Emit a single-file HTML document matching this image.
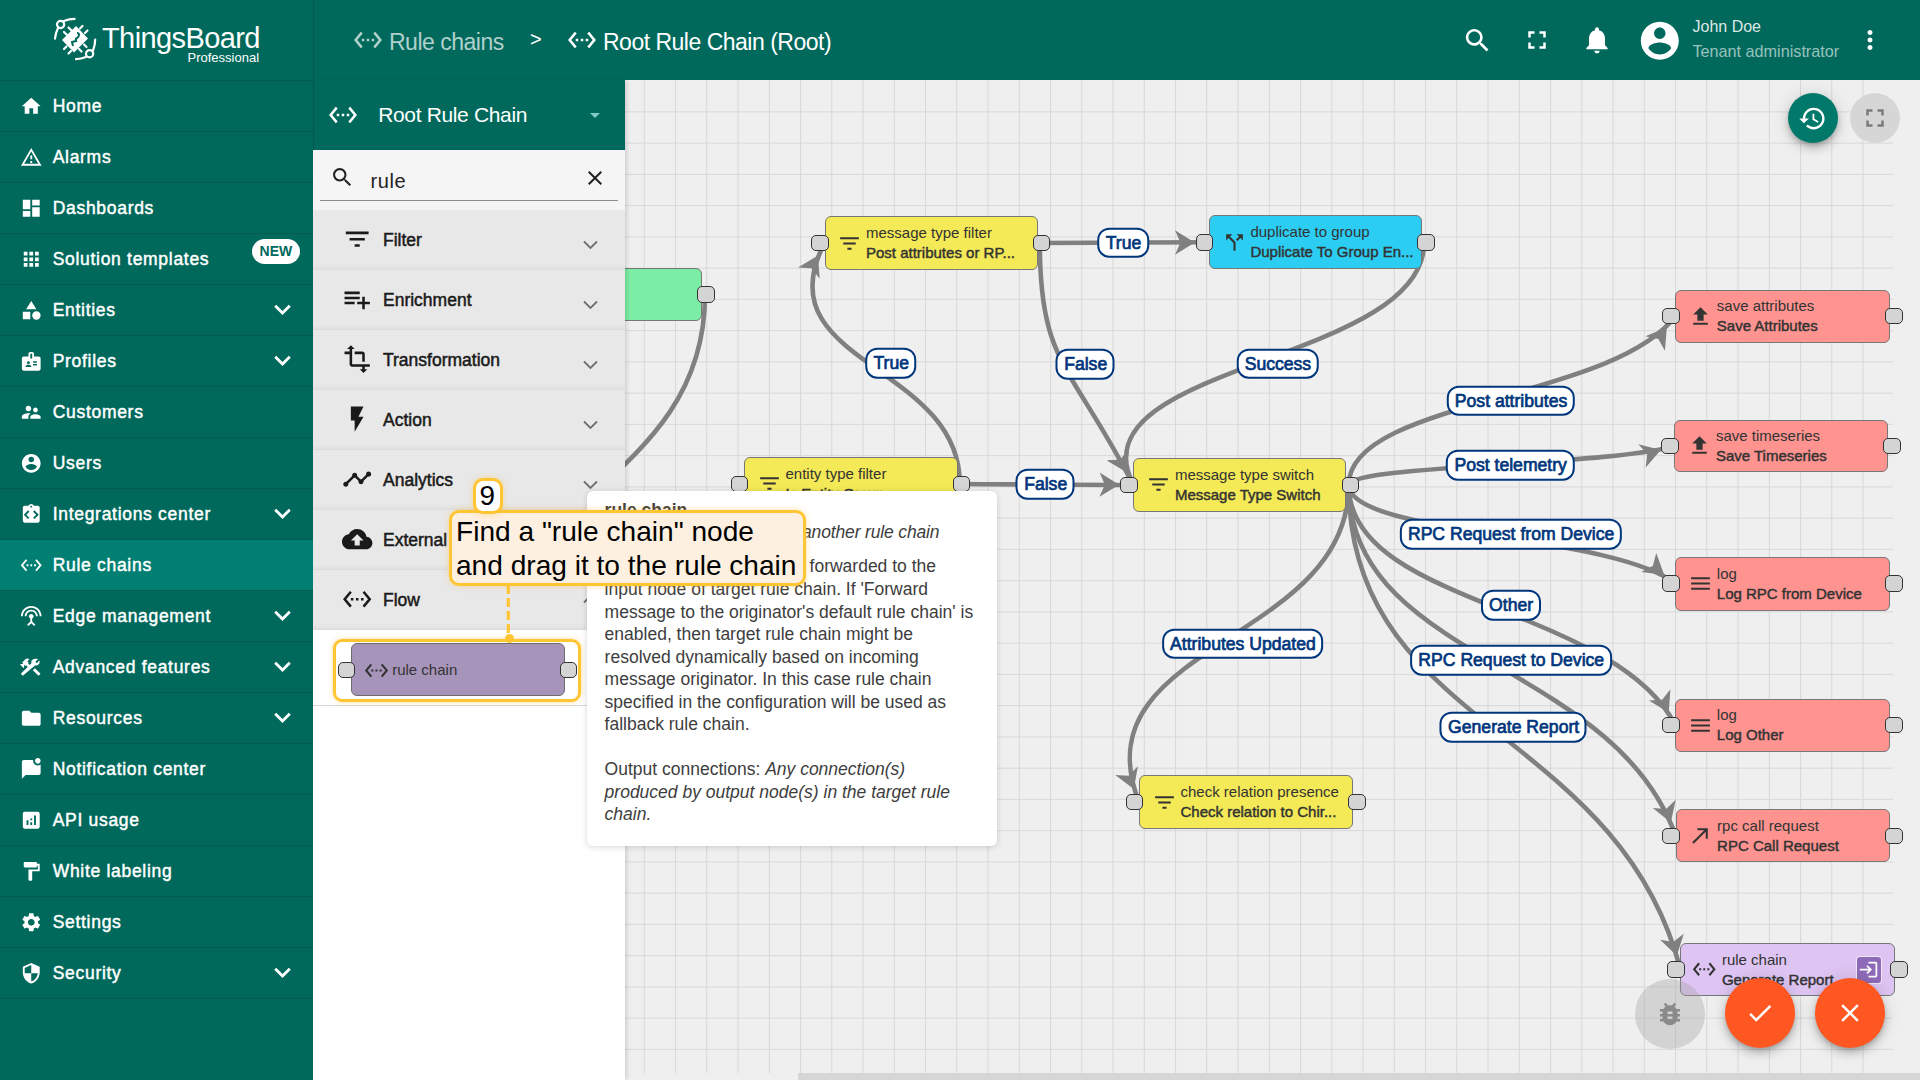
<!DOCTYPE html><html><head><meta charset="utf-8"><style>
html,body{margin:0;padding:0;width:1920px;height:1080px;overflow:hidden;background:#efefef;font-family:"Liberation Sans",sans-serif;}
div{box-sizing:border-box}
</style></head><body>
<div style="position:absolute;left:625px;top:80px;width:1295px;height:1000px;background:#efefef;overflow:hidden">
<svg style="position:absolute;left:0;top:0" width="1295" height="1000"><path d="M19.30 0V993 M50.55 0V993 M81.80 0V993 M113.05 0V993 M144.30 0V993 M175.55 0V993 M206.80 0V993 M238.05 0V993 M269.30 0V993 M300.55 0V993 M331.80 0V993 M363.05 0V993 M394.30 0V993 M425.55 0V993 M456.80 0V993 M488.05 0V993 M519.30 0V993 M550.55 0V993 M581.80 0V993 M613.05 0V993 M644.30 0V993 M675.55 0V993 M706.80 0V993 M738.05 0V993 M769.30 0V993 M800.55 0V993 M831.80 0V993 M863.05 0V993 M894.30 0V993 M925.55 0V993 M956.80 0V993 M988.05 0V993 M1019.30 0V993 M1050.55 0V993 M1081.80 0V993 M1113.05 0V993 M1144.30 0V993 M1175.55 0V993 M1206.80 0V993 M1238.05 0V993 M0 31.90H1268 M0 63.15H1268 M0 94.40H1268 M0 125.65H1268 M0 156.90H1268 M0 188.15H1268 M0 219.40H1268 M0 250.65H1268 M0 281.90H1268 M0 313.15H1268 M0 344.40H1268 M0 375.65H1268 M0 406.90H1268 M0 438.15H1268 M0 469.40H1268 M0 500.65H1268 M0 531.90H1268 M0 563.15H1268 M0 594.40H1268 M0 625.65H1268 M0 656.90H1268 M0 688.15H1268 M0 719.40H1268 M0 750.65H1268 M0 781.90H1268 M0 813.15H1268 M0 844.40H1268 M0 875.65H1268 M0 906.90H1268 M0 938.15H1268 M0 969.40H1268" stroke="#d8d8d8" stroke-width="1" fill="none"/></svg>
</div>
<div style="position:absolute;left:625px;top:80px;width:1295px;height:993px;overflow:hidden">
<svg style="position:absolute;left:-625px;top:-80px" width="1920" height="1080"><g fill="none" stroke="#808080" stroke-width="4.6"><path d="M1039.80 243.00 C1039.80 242.65 1146.40 242.65 1208.90 242.30"/><path d="M1039.80 243.00 C1039.80 363.98 1070.90 363.98 1133.40 484.95"/><path d="M1424.20 242.30 C1424.20 363.62 1070.90 363.62 1133.40 484.95"/><path d="M959.80 483.80 C959.80 363.40 762.00 363.40 824.50 243.00"/><path d="M959.80 483.80 C959.80 484.38 1070.90 484.38 1133.40 484.95"/><path d="M1348.70 484.95 C1348.70 400.57 1612.80 400.57 1675.30 316.20"/><path d="M1348.70 484.95 C1348.70 465.40 1611.90 465.40 1674.40 445.85"/><path d="M1348.70 484.95 C1348.70 534.23 1612.80 534.23 1675.30 583.50"/><path d="M1348.70 484.95 C1348.70 604.98 1612.80 604.98 1675.30 725.00"/><path d="M1348.70 484.95 C1348.70 660.38 1613.10 660.38 1675.60 835.80"/><path d="M1348.70 484.95 C1348.70 727.23 1617.90 727.23 1680.40 969.50"/><path d="M1348.70 484.95 C1348.70 643.55 1076.50 643.55 1139.00 802.15"/><path d="M705.00 294.50 C705.00 502.25 447.50 502.25 510.00 710.00"/></g><g fill="#808080"><polygon points="1194.70,242.38 1175.07,254.69 1180.40,242.46 1174.93,230.29"/><polygon points="1126.88,472.33 1107.00,460.43 1120.32,459.63 1128.68,449.23"/><polygon points="1126.90,472.33 1107.03,460.40 1120.35,459.61 1128.72,449.23"/><polygon points="817.96,255.60 819.71,278.71 811.37,268.29 798.05,267.47"/><polygon points="1119.20,484.82 1099.39,496.84 1104.90,484.69 1099.61,472.44"/><polygon points="1666.85,327.61 1664.93,350.70 1658.34,339.10 1645.32,336.18"/><polygon points="1660.85,450.09 1645.69,467.61 1647.20,454.36 1638.40,444.33"/><polygon points="1664.15,574.71 1641.13,572.09 1652.92,565.85 1656.23,552.93"/><polygon points="1668.74,712.41 1648.82,700.57 1662.14,699.72 1670.46,689.30"/><polygon points="1670.83,822.42 1652.73,807.96 1666.04,808.95 1675.72,799.77"/><polygon points="1676.85,955.75 1660.12,939.72 1673.28,941.90 1683.75,933.63"/><polygon points="1133.79,788.94 1115.22,775.08 1128.55,775.63 1137.92,766.14"/></g></svg>
</div>
<div style="position:absolute;left:625px;top:80px;width:1295px;height:993px;overflow:hidden">
<div style="position:absolute;left:-625px;top:-80px;width:1920px;height:1080px">
<div style="position:absolute;left:489.00px;top:268.00px;width:213.00px;height:53.00px;background:#7ceda5;border:1px solid #777;border-radius:6px"></div><div style="position:absolute;left:475.70px;top:286.20px;width:17.6px;height:16.6px;background:#d4d4d4;border:1.3px solid #333;border-radius:5px"></div><div style="position:absolute;left:697.40px;top:286.20px;width:17.6px;height:16.6px;background:#d4d4d4;border:1.3px solid #333;border-radius:5px"></div>
<div style="position:absolute;left:824.50px;top:216.00px;width:213.00px;height:54.00px;background:#f4e956;border:1px solid #777;border-radius:6px"></div><svg style="position:absolute;left:837.10px;top:230.50px;width:25.00px;height:25.00px;" viewBox="0 0 24 24"><path fill="#333" d="M10 18h4v-2h-4v2zM3 6v2h18V6H3zm3 7h12v-2H6v2z"/></svg><div style="position:absolute;left:866.00px;top:224.13px;white-space:nowrap;font-size:15px;line-height:17.250px;color:#333;">message type filter</div><div style="position:absolute;left:866.00px;top:244.08px;white-space:nowrap;font-size:15px;line-height:17.250px;color:#333;-webkit-text-stroke:0.45px #333">Post attributes or RP...</div><div style="position:absolute;left:811.20px;top:234.70px;width:17.6px;height:16.6px;background:#d4d4d4;border:1.3px solid #333;border-radius:5px"></div><div style="position:absolute;left:1032.90px;top:234.70px;width:17.6px;height:16.6px;background:#d4d4d4;border:1.3px solid #333;border-radius:5px"></div>
<div style="position:absolute;left:1208.90px;top:215.30px;width:213.00px;height:54.00px;background:#2bcdf2;border:1px solid #777;border-radius:6px"></div><svg style="position:absolute;left:1221.50px;top:229.80px;width:25.00px;height:25.00px;" viewBox="0 0 24 24"><path fill="#333" d="M14 4l2.29 2.29-2.88 2.88 1.42 1.42 2.88-2.88L20 10V4zm-4 0H4v6l2.29-2.29 4.71 4.7V20h2v-8.41l-5.29-5.3z"/></svg><div style="position:absolute;left:1250.40px;top:223.43px;white-space:nowrap;font-size:15px;line-height:17.250px;color:#333;">duplicate to group</div><div style="position:absolute;left:1250.40px;top:243.38px;white-space:nowrap;font-size:15px;line-height:17.250px;color:#333;-webkit-text-stroke:0.45px #333">Duplicate To Group En...</div><div style="position:absolute;left:1195.60px;top:234.00px;width:17.6px;height:16.6px;background:#d4d4d4;border:1.3px solid #333;border-radius:5px"></div><div style="position:absolute;left:1417.30px;top:234.00px;width:17.6px;height:16.6px;background:#d4d4d4;border:1.3px solid #333;border-radius:5px"></div>
<div style="position:absolute;left:744.00px;top:456.80px;width:213.50px;height:54.00px;background:#f4e956;border:1px solid #777;border-radius:6px"></div><svg style="position:absolute;left:756.60px;top:471.30px;width:25.00px;height:25.00px;" viewBox="0 0 24 24"><path fill="#333" d="M10 18h4v-2h-4v2zM3 6v2h18V6H3zm3 7h12v-2H6v2z"/></svg><div style="position:absolute;left:785.50px;top:464.93px;white-space:nowrap;font-size:15px;line-height:17.250px;color:#333;">entity type filter</div><div style="position:absolute;left:785.50px;top:484.88px;white-space:nowrap;font-size:15px;line-height:17.250px;color:#333;-webkit-text-stroke:0.45px #333">Is Entity Group</div><div style="position:absolute;left:730.70px;top:475.50px;width:17.6px;height:16.6px;background:#d4d4d4;border:1.3px solid #333;border-radius:5px"></div><div style="position:absolute;left:952.90px;top:475.50px;width:17.6px;height:16.6px;background:#d4d4d4;border:1.3px solid #333;border-radius:5px"></div>
<div style="position:absolute;left:1133.40px;top:458.30px;width:213.00px;height:53.30px;background:#f4e956;border:1px solid #777;border-radius:6px"></div><svg style="position:absolute;left:1146.00px;top:472.45px;width:25.00px;height:25.00px;" viewBox="0 0 24 24"><path fill="#333" d="M10 18h4v-2h-4v2zM3 6v2h18V6H3zm3 7h12v-2H6v2z"/></svg><div style="position:absolute;left:1174.90px;top:466.08px;white-space:nowrap;font-size:15px;line-height:17.250px;color:#333;">message type switch</div><div style="position:absolute;left:1174.90px;top:486.03px;white-space:nowrap;font-size:15px;line-height:17.250px;color:#333;-webkit-text-stroke:0.45px #333">Message Type Switch</div><div style="position:absolute;left:1120.10px;top:476.65px;width:17.6px;height:16.6px;background:#d4d4d4;border:1.3px solid #333;border-radius:5px"></div><div style="position:absolute;left:1341.80px;top:476.65px;width:17.6px;height:16.6px;background:#d4d4d4;border:1.3px solid #333;border-radius:5px"></div>
<div style="position:absolute;left:1675.30px;top:289.70px;width:214.50px;height:53.00px;background:#ff9390;border:1px solid #777;border-radius:6px"></div><svg style="position:absolute;left:1687.90px;top:303.70px;width:25.00px;height:25.00px;" viewBox="0 0 24 24"><path fill="#333" d="M9 16h6v-6h4l-7-7-7 7h4zm-4 2h14v2H5z"/></svg><div style="position:absolute;left:1716.80px;top:297.33px;white-space:nowrap;font-size:15px;line-height:17.250px;color:#333;">save attributes</div><div style="position:absolute;left:1716.80px;top:317.28px;white-space:nowrap;font-size:15px;line-height:17.250px;color:#333;-webkit-text-stroke:0.45px #333">Save Attributes</div><div style="position:absolute;left:1662.00px;top:307.90px;width:17.6px;height:16.6px;background:#d4d4d4;border:1.3px solid #333;border-radius:5px"></div><div style="position:absolute;left:1885.20px;top:307.90px;width:17.6px;height:16.6px;background:#d4d4d4;border:1.3px solid #333;border-radius:5px"></div>
<div style="position:absolute;left:1674.40px;top:419.60px;width:213.50px;height:52.50px;background:#ff9390;border:1px solid #777;border-radius:6px"></div><svg style="position:absolute;left:1687.00px;top:433.35px;width:25.00px;height:25.00px;" viewBox="0 0 24 24"><path fill="#333" d="M9 16h6v-6h4l-7-7-7 7h4zm-4 2h14v2H5z"/></svg><div style="position:absolute;left:1715.90px;top:426.98px;white-space:nowrap;font-size:15px;line-height:17.250px;color:#333;">save timeseries</div><div style="position:absolute;left:1715.90px;top:446.93px;white-space:nowrap;font-size:15px;line-height:17.250px;color:#333;-webkit-text-stroke:0.45px #333">Save Timeseries</div><div style="position:absolute;left:1661.10px;top:437.55px;width:17.6px;height:16.6px;background:#d4d4d4;border:1.3px solid #333;border-radius:5px"></div><div style="position:absolute;left:1883.30px;top:437.55px;width:17.6px;height:16.6px;background:#d4d4d4;border:1.3px solid #333;border-radius:5px"></div>
<div style="position:absolute;left:1675.30px;top:556.50px;width:214.50px;height:54.00px;background:#ff9390;border:1px solid #777;border-radius:6px"></div><svg style="position:absolute;left:1687.90px;top:571.00px;width:25.00px;height:25.00px;" viewBox="0 0 24 24"><path fill="#333" d="M3 18h18v-2H3v2zm0-5h18v-2H3v2zm0-7v2h18V6H3z"/></svg><div style="position:absolute;left:1716.80px;top:564.63px;white-space:nowrap;font-size:15px;line-height:17.250px;color:#333;">log</div><div style="position:absolute;left:1716.80px;top:584.58px;white-space:nowrap;font-size:15px;line-height:17.250px;color:#333;-webkit-text-stroke:0.45px #333">Log RPC from Device</div><div style="position:absolute;left:1662.00px;top:575.20px;width:17.6px;height:16.6px;background:#d4d4d4;border:1.3px solid #333;border-radius:5px"></div><div style="position:absolute;left:1885.20px;top:575.20px;width:17.6px;height:16.6px;background:#d4d4d4;border:1.3px solid #333;border-radius:5px"></div>
<div style="position:absolute;left:1675.30px;top:698.50px;width:214.50px;height:53.00px;background:#ff9390;border:1px solid #777;border-radius:6px"></div><svg style="position:absolute;left:1687.90px;top:712.50px;width:25.00px;height:25.00px;" viewBox="0 0 24 24"><path fill="#333" d="M3 18h18v-2H3v2zm0-5h18v-2H3v2zm0-7v2h18V6H3z"/></svg><div style="position:absolute;left:1716.80px;top:706.13px;white-space:nowrap;font-size:15px;line-height:17.250px;color:#333;">log</div><div style="position:absolute;left:1716.80px;top:726.08px;white-space:nowrap;font-size:15px;line-height:17.250px;color:#333;-webkit-text-stroke:0.45px #333">Log Other</div><div style="position:absolute;left:1662.00px;top:716.70px;width:17.6px;height:16.6px;background:#d4d4d4;border:1.3px solid #333;border-radius:5px"></div><div style="position:absolute;left:1885.20px;top:716.70px;width:17.6px;height:16.6px;background:#d4d4d4;border:1.3px solid #333;border-radius:5px"></div>
<div style="position:absolute;left:1139.00px;top:775.20px;width:214.00px;height:53.90px;background:#f4e956;border:1px solid #777;border-radius:6px"></div><svg style="position:absolute;left:1151.60px;top:789.65px;width:25.00px;height:25.00px;" viewBox="0 0 24 24"><path fill="#333" d="M10 18h4v-2h-4v2zM3 6v2h18V6H3zm3 7h12v-2H6v2z"/></svg><div style="position:absolute;left:1180.50px;top:783.28px;white-space:nowrap;font-size:15px;line-height:17.250px;color:#333;">check relation presence</div><div style="position:absolute;left:1180.50px;top:803.23px;white-space:nowrap;font-size:15px;line-height:17.250px;color:#333;-webkit-text-stroke:0.45px #333">Check relation to Chir...</div><div style="position:absolute;left:1125.70px;top:793.85px;width:17.6px;height:16.6px;background:#d4d4d4;border:1.3px solid #333;border-radius:5px"></div><div style="position:absolute;left:1348.40px;top:793.85px;width:17.6px;height:16.6px;background:#d4d4d4;border:1.3px solid #333;border-radius:5px"></div>
<div style="position:absolute;left:1675.60px;top:809.30px;width:214.00px;height:53.00px;background:#ff9390;border:1px solid #777;border-radius:6px"></div><svg style="position:absolute;left:1688.20px;top:823.30px;width:25.00px;height:25.00px;" viewBox="0 0 24 24"><path fill="#333" d="M9 5v2h6.59L4 18.59 5.41 20 17 8.41V15h2V5z"/></svg><div style="position:absolute;left:1717.10px;top:816.93px;white-space:nowrap;font-size:15px;line-height:17.250px;color:#333;">rpc call request</div><div style="position:absolute;left:1717.10px;top:836.88px;white-space:nowrap;font-size:15px;line-height:17.250px;color:#333;-webkit-text-stroke:0.45px #333">RPC Call Request</div><div style="position:absolute;left:1662.30px;top:827.50px;width:17.6px;height:16.6px;background:#d4d4d4;border:1.3px solid #333;border-radius:5px"></div><div style="position:absolute;left:1885.00px;top:827.50px;width:17.6px;height:16.6px;background:#d4d4d4;border:1.3px solid #333;border-radius:5px"></div>
<div style="position:absolute;left:1680.40px;top:943.00px;width:214.30px;height:53.00px;background:#ddc4f2;border:1px solid #777;border-radius:6px"></div><svg style="position:absolute;left:1692.20px;top:957.25px;width:24.50px;height:24.50px;" viewBox="0 0 24 24"><path fill="#333" d="M7.77 6.76L6.23 5.48.82 12l5.41 6.52 1.54-1.28L3.42 12l4.35-5.24zM7 13h2v-2H7v2zm10-2h-2v2h2v-2zm-6 2h2v-2h-2v2zm6.77-7.52l-1.54 1.28L20.58 12l-4.35 5.24 1.54 1.28L23.18 12l-5.41-6.52z"/></svg><div style="position:absolute;left:1721.90px;top:950.63px;white-space:nowrap;font-size:15px;line-height:17.250px;color:#333;">rule chain</div><div style="position:absolute;left:1721.90px;top:970.58px;white-space:nowrap;font-size:15px;line-height:17.250px;color:#333;-webkit-text-stroke:0.45px #333">Generate Report</div><div style="position:absolute;left:1667.10px;top:961.20px;width:17.6px;height:16.6px;background:#d4d4d4;border:1.3px solid #333;border-radius:5px"></div><div style="position:absolute;left:1890.10px;top:961.20px;width:17.6px;height:16.6px;background:#d4d4d4;border:1.3px solid #333;border-radius:5px"></div><div style="position:absolute;left:1855.50px;top:956.20px;width:26.6px;height:27.6px;background:#8e6bb8;border:1.5px solid rgba(255,255,255,0.85);border-radius:4px"></div><svg style="position:absolute;left:1858.10px;top:959.40px;width:21.00px;height:21.00px;" viewBox="0 0 24 24"><path fill="#fff" d="M11 7L9.6 8.4l2.6 2.6H2v2h10.2l-2.6 2.6L11 17l5-5-5-5zm9 12h-8v2h8c1.1 0 2-.9 2-2V5c0-1.1-.9-2-2-2h-8v2h8v14z"/></svg>
<div style="position:absolute;left:1123.05px;top:242.65px;transform:translate(-50%,-50%);height:30.7px;padding:0 5.6px 0 6.4px;background:#fff;border:2.2px solid #00367c;border-radius:12px;color:#00367c;font-size:17.6px;line-height:27px;-webkit-text-stroke:0.7px #00367c;white-space:nowrap">True</div>
<div style="position:absolute;left:1085.30px;top:363.98px;transform:translate(-50%,-50%);height:30.7px;padding:0 5.6px 0 6.4px;background:#fff;border:2.2px solid #00367c;border-radius:12px;color:#00367c;font-size:17.6px;line-height:27px;-webkit-text-stroke:0.7px #00367c;white-space:nowrap">False</div>
<div style="position:absolute;left:1277.50px;top:363.62px;transform:translate(-50%,-50%);height:30.7px;padding:0 5.6px 0 6.4px;background:#fff;border:2.2px solid #00367c;border-radius:12px;color:#00367c;font-size:17.6px;line-height:27px;-webkit-text-stroke:0.7px #00367c;white-space:nowrap">Success</div>
<div style="position:absolute;left:890.85px;top:363.40px;transform:translate(-50%,-50%);height:30.7px;padding:0 5.6px 0 6.4px;background:#fff;border:2.2px solid #00367c;border-radius:12px;color:#00367c;font-size:17.6px;line-height:27px;-webkit-text-stroke:0.7px #00367c;white-space:nowrap">True</div>
<div style="position:absolute;left:1045.30px;top:484.38px;transform:translate(-50%,-50%);height:30.7px;padding:0 5.6px 0 6.4px;background:#fff;border:2.2px solid #00367c;border-radius:12px;color:#00367c;font-size:17.6px;line-height:27px;-webkit-text-stroke:0.7px #00367c;white-space:nowrap">False</div>
<div style="position:absolute;left:1510.70px;top:400.57px;transform:translate(-50%,-50%);height:30.7px;padding:0 5.6px 0 6.4px;background:#fff;border:2.2px solid #00367c;border-radius:12px;color:#00367c;font-size:17.6px;line-height:27px;-webkit-text-stroke:0.7px #00367c;white-space:nowrap">Post attributes</div>
<div style="position:absolute;left:1510.25px;top:465.40px;transform:translate(-50%,-50%);height:30.7px;padding:0 5.6px 0 6.4px;background:#fff;border:2.2px solid #00367c;border-radius:12px;color:#00367c;font-size:17.6px;line-height:27px;-webkit-text-stroke:0.7px #00367c;white-space:nowrap">Post telemetry</div>
<div style="position:absolute;left:1510.70px;top:534.23px;transform:translate(-50%,-50%);height:30.7px;padding:0 5.6px 0 6.4px;background:#fff;border:2.2px solid #00367c;border-radius:12px;color:#00367c;font-size:17.6px;line-height:27px;-webkit-text-stroke:0.7px #00367c;white-space:nowrap">RPC Request from Device</div>
<div style="position:absolute;left:1510.70px;top:604.98px;transform:translate(-50%,-50%);height:30.7px;padding:0 5.6px 0 6.4px;background:#fff;border:2.2px solid #00367c;border-radius:12px;color:#00367c;font-size:17.6px;line-height:27px;-webkit-text-stroke:0.7px #00367c;white-space:nowrap">Other</div>
<div style="position:absolute;left:1510.85px;top:660.38px;transform:translate(-50%,-50%);height:30.7px;padding:0 5.6px 0 6.4px;background:#fff;border:2.2px solid #00367c;border-radius:12px;color:#00367c;font-size:17.6px;line-height:27px;-webkit-text-stroke:0.7px #00367c;white-space:nowrap">RPC Request to Device</div>
<div style="position:absolute;left:1513.25px;top:727.23px;transform:translate(-50%,-50%);height:30.7px;padding:0 5.6px 0 6.4px;background:#fff;border:2.2px solid #00367c;border-radius:12px;color:#00367c;font-size:17.6px;line-height:27px;-webkit-text-stroke:0.7px #00367c;white-space:nowrap">Generate Report</div>
<div style="position:absolute;left:1242.55px;top:643.55px;transform:translate(-50%,-50%);height:30.7px;padding:0 5.6px 0 6.4px;background:#fff;border:2.2px solid #00367c;border-radius:12px;color:#00367c;font-size:17.6px;line-height:27px;-webkit-text-stroke:0.7px #00367c;white-space:nowrap">Attributes Updated</div>
</div></div>
<div style="position:absolute;left:798px;top:1073px;width:1122px;height:7px;background:#d6d6d6"></div>
<div style="position:absolute;left:1788px;top:93px;width:50px;height:50px;border-radius:50%;background:#00796b;box-shadow:0 3px 5px -1px rgba(0,0,0,.2),0 6px 10px 0 rgba(0,0,0,.14),0 1px 18px 0 rgba(0,0,0,.12)"></div>
<svg style="position:absolute;left:1798.00px;top:103.50px;width:29.00px;height:29.00px;" viewBox="0 0 24 24"><path fill="#fff" d="M13 3c-4.97 0-9 4.03-9 9H1l3.89 3.89.07.14L9 12H6c0-3.87 3.13-7 7-7s7 3.13 7 7-3.13 7-7 7c-1.93 0-3.68-.79-4.94-2.06l-1.42 1.42C8.27 19.99 10.51 21 13 21c4.97 0 9-4.03 9-9s-4.03-9-9-9zm-1 5v5l4.28 2.54.72-1.21-3.5-2.08V8H12z"/></svg>
<div style="position:absolute;left:1850px;top:93px;width:50px;height:50px;border-radius:50%;background:#d6d6d6"></div>
<svg style="position:absolute;left:1860.00px;top:103.00px;width:30.00px;height:30.00px;" viewBox="0 0 24 24"><path fill="#7b7b7b" d="M7 14H5v5h5v-2H7v-3zm-2-4h2V7h3V5H5v5zm12 7h-3v2h5v-5h-2v3zM14 5v2h3v3h2V5h-5z"/></svg>
<div style="position:absolute;left:1635px;top:978.5px;width:70px;height:70px;border-radius:50%;background:rgba(160,160,160,0.35)"></div>
<svg style="position:absolute;left:1655.00px;top:998.50px;width:30.00px;height:30.00px;" viewBox="0 0 24 24"><path fill="#8a8a8a" d="M20 8h-2.81c-.45-.78-1.07-1.45-1.82-1.96L17 4.41 15.59 3l-2.17 2.17C12.96 5.06 12.49 5 12 5c-.49 0-.96.06-1.41.17L8.41 3 7 4.41l1.62 1.63C7.88 6.55 7.26 7.22 6.81 8H4v2h2.09c-.05.33-.09.66-.09 1v1H4v2h2v1c0 .34.04.67.09 1H4v2h2.81c1.04 1.79 2.97 3 5.19 3s4.15-1.21 5.19-3H20v-2h-2.09c.05-.33.09-.66.09-1v-1h2v-2h-2v-1c0-.34-.04-.67-.09-1H20V8zm-6 8h-4v-2h4v2zm0-4h-4v-2h4v2z"/></svg>
<div style="position:absolute;left:1725px;top:977.5px;width:70px;height:70px;border-radius:50%;background:#ff5722;box-shadow:0 3px 5px -1px rgba(0,0,0,.2),0 6px 10px 0 rgba(0,0,0,.14),0 1px 18px 0 rgba(0,0,0,.12)"></div>
<svg style="position:absolute;left:1745.00px;top:997.50px;width:30.00px;height:30.00px;" viewBox="0 0 24 24"><path fill="#fff" d="M9 16.2L4.8 12l-1.4 1.4L9 19 21 7l-1.4-1.4L9 16.2z"/></svg>
<div style="position:absolute;left:1815px;top:977.5px;width:70px;height:70px;border-radius:50%;background:#ff5722;box-shadow:0 3px 5px -1px rgba(0,0,0,.2),0 6px 10px 0 rgba(0,0,0,.14),0 1px 18px 0 rgba(0,0,0,.12)"></div>
<svg style="position:absolute;left:1835.00px;top:997.50px;width:30.00px;height:30.00px;" viewBox="0 0 24 24"><path fill="#fff" d="M19 6.41L17.59 5 12 10.59 6.41 5 5 6.41 10.59 12 5 17.59 6.41 19 12 13.41 17.59 19 19 17.59 13.41 12z"/></svg>
<div style="position:absolute;left:313px;top:0;width:1607px;height:80px;background:#00695c"></div>
<svg style="position:absolute;left:353.00px;top:25.00px;width:30.00px;height:30.00px;" viewBox="0 0 24 24"><path fill="rgba(255,255,255,0.7)" d="M7.77 6.76L6.23 5.48.82 12l5.41 6.52 1.54-1.28L3.42 12l4.35-5.24zM7 13h2v-2H7v2zm10-2h-2v2h2v-2zm-6 2h2v-2h-2v2zm6.77-7.52l-1.54 1.28L20.58 12l-4.35 5.24 1.54 1.28L23.18 12l-5.41-6.52z"/></svg>
<div style="position:absolute;left:389.00px;top:28.81px;white-space:nowrap;font-size:23px;line-height:26.450px;color:rgba(255,255,255,0.7);letter-spacing:-0.5px">Rule chains</div>
<div style="position:absolute;left:530.00px;top:27.57px;white-space:nowrap;font-size:20px;line-height:23.000px;color:#fff;">&gt;</div>
<svg style="position:absolute;left:566.50px;top:25.00px;width:30.00px;height:30.00px;" viewBox="0 0 24 24"><path fill="#fff" d="M7.77 6.76L6.23 5.48.82 12l5.41 6.52 1.54-1.28L3.42 12l4.35-5.24zM7 13h2v-2H7v2zm10-2h-2v2h2v-2zm-6 2h2v-2h-2v2zm6.77-7.52l-1.54 1.28L20.58 12l-4.35 5.24 1.54 1.28L23.18 12l-5.41-6.52z"/></svg>
<div style="position:absolute;left:603.00px;top:28.81px;white-space:nowrap;font-size:23px;line-height:26.450px;color:#fff;letter-spacing:-0.5px">Root Rule Chain (Root)</div>
<svg style="position:absolute;left:1461.70px;top:25.10px;width:31.00px;height:31.00px;" viewBox="0 0 24 24"><path fill="#fff" d="M15.5 14h-.79l-.28-.27C15.41 12.59 16 11.11 16 9.5 16 5.91 13.09 3 9.5 3S3 5.91 3 9.5 5.91 16 9.5 16c1.61 0 3.09-.59 4.23-1.57l.27.28v.79l5 4.99L20.49 19l-4.99-5zm-6 0C7.01 14 5 11.99 5 9.5S7.01 5 9.5 5 14 7.01 14 9.5 11.99 14 9.5 14z"/></svg>
<svg style="position:absolute;left:1522.00px;top:25.00px;width:30.00px;height:30.00px;" viewBox="0 0 24 24"><path fill="#fff" d="M7 14H5v5h5v-2H7v-3zm-2-4h2V7h3V5H5v5zm12 7h-3v2h5v-5h-2v3zM14 5v2h3v3h2V5h-5z"/></svg>
<svg style="position:absolute;left:1581.40px;top:24.00px;width:32.00px;height:32.00px;" viewBox="0 0 24 24"><path fill="#fff" d="M12 22c1.1 0 2-.9 2-2h-4c0 1.1.89 2 2 2zm6-6v-5c0-3.07-1.64-5.64-4.5-6.32V4c0-.83-.67-1.5-1.5-1.5s-1.5.67-1.5 1.5v.68C7.63 5.36 6 7.92 6 11v5l-2 2v1h16v-1l-2-2z"/></svg>
<svg style="position:absolute;left:1637.00px;top:17.80px;width:45.60px;height:45.60px;" viewBox="0 0 24 24"><path fill="#fff" d="M12 2C6.48 2 2 6.48 2 12s4.48 10 10 10 10-4.48 10-10S17.52 2 12 2zm0 3c1.66 0 3 1.34 3 3s-1.34 3-3 3-3-1.34-3-3 1.34-3 3-3zm0 14.2c-2.5 0-4.71-1.28-6-3.22.03-1.99 4-3.08 6-3.08 1.99 0 5.97 1.09 6 3.08-1.29 1.94-3.5 3.22-6 3.22z"/></svg>
<div style="position:absolute;left:1692.50px;top:18.26px;white-space:nowrap;font-size:16px;line-height:18.400px;color:rgba(255,255,255,0.87);">John Doe</div>
<div style="position:absolute;left:1692.50px;top:42.07px;white-space:nowrap;font-size:16.2px;line-height:18.630px;color:rgba(255,255,255,0.6);">Tenant administrator</div>
<svg style="position:absolute;left:1855.00px;top:25.00px;width:30.00px;height:30.00px;" viewBox="0 0 24 24"><path fill="#fff" d="M12 8c1.1 0 2-.9 2-2s-.9-2-2-2-2 .9-2 2 .9 2 2 2zm0 2c-1.1 0-2 .9-2 2s.9 2 2 2 2-.9 2-2-.9-2-2-2zm0 6c-1.1 0-2 .9-2 2s.9 2 2 2 2-.9 2-2-.9-2-2-2z"/></svg>
<div style="position:absolute;left:0;top:0;width:313px;height:1080px;background:#00695c"></div>
<div style="position:absolute;left:0;top:80px;width:313px;height:1px;background:rgba(0,0,0,0.12)"></div>
<div style="position:absolute;left:0;top:131px;width:313px;height:1px;background:rgba(0,0,0,0.12)"></div>
<svg style="position:absolute;left:19.80px;top:94.70px;width:22.50px;height:22.50px;" viewBox="0 0 24 24"><path fill="#fff" d="M10 20v-6h4v6h5v-8h3L12 3 2 12h3v8z"/></svg>
<div style="position:absolute;left:52.70px;top:95.87px;white-space:nowrap;font-size:17.5px;line-height:20.125px;color:#fff;letter-spacing:0.7px;-webkit-text-stroke:0.45px #fff">Home</div>
<div style="position:absolute;left:0;top:182px;width:313px;height:1px;background:rgba(0,0,0,0.12)"></div>
<svg style="position:absolute;left:19.80px;top:145.70px;width:22.50px;height:22.50px;" viewBox="0 0 24 24"><path fill="#fff" d="M12 5.99L19.53 19H4.47L12 5.99M12 2L1 21h22L12 2zm1 14h-2v2h2v-2zm0-6h-2v4h2v-4z"/></svg>
<div style="position:absolute;left:52.70px;top:146.87px;white-space:nowrap;font-size:17.5px;line-height:20.125px;color:#fff;letter-spacing:0.7px;-webkit-text-stroke:0.45px #fff">Alarms</div>
<div style="position:absolute;left:0;top:233px;width:313px;height:1px;background:rgba(0,0,0,0.12)"></div>
<svg style="position:absolute;left:19.80px;top:196.70px;width:22.50px;height:22.50px;" viewBox="0 0 24 24"><path fill="#fff" d="M3 13h8V3H3v10zm0 8h8v-6H3v6zm10 0h8V11h-8v10zm0-18v6h8V3h-8z"/></svg>
<div style="position:absolute;left:52.70px;top:197.87px;white-space:nowrap;font-size:17.5px;line-height:20.125px;color:#fff;letter-spacing:0.7px;-webkit-text-stroke:0.45px #fff">Dashboards</div>
<div style="position:absolute;left:0;top:284px;width:313px;height:1px;background:rgba(0,0,0,0.12)"></div>
<svg style="position:absolute;left:19.80px;top:247.70px;width:22.50px;height:22.50px;" viewBox="0 0 24 24"><path fill="#fff" d="M4 8h4V4H4v4zm6 12h4v-4h-4v4zm-6 0h4v-4H4v4zm0-6h4v-4H4v4zm6 0h4v-4h-4v4zm6-10v4h4V4h-4zm-6 4h4V4h-4v4zm6 6h4v-4h-4v4zm0 6h4v-4h-4v4z"/></svg>
<div style="position:absolute;left:52.70px;top:248.87px;white-space:nowrap;font-size:17.5px;line-height:20.125px;color:#fff;letter-spacing:0.7px;-webkit-text-stroke:0.45px #fff">Solution templates</div>
<div style="position:absolute;left:0;top:335px;width:313px;height:1px;background:rgba(0,0,0,0.12)"></div>
<svg style="position:absolute;left:19.80px;top:298.70px;width:22.50px;height:22.50px;" viewBox="0 0 24 24"><path fill="#fff" d="M12 2l-5.5 9h11zM17.5 13a4.5 4.5 0 1 0 0 9a4.5 4.5 0 1 0 0-9zM3 13.5h8v8H3z"/></svg>
<div style="position:absolute;left:52.70px;top:299.87px;white-space:nowrap;font-size:17.5px;line-height:20.125px;color:#fff;letter-spacing:0.7px;-webkit-text-stroke:0.45px #fff">Entities</div>
<svg style="position:absolute;left:266.25px;top:292.90px;width:33.00px;height:33.00px;" viewBox="0 0 24 24"><path fill="#fff" d="M16.59 8.59L12 13.17 7.41 8.59 6 10l6 6 6-6z"/></svg>
<div style="position:absolute;left:0;top:386px;width:313px;height:1px;background:rgba(0,0,0,0.12)"></div>
<svg style="position:absolute;left:19.80px;top:349.70px;width:22.50px;height:22.50px;" viewBox="0 0 24 24"><path fill="#fff" d="M20 7h-5V4c0-1.1-.9-2-2-2h-2c-1.1 0-2 .9-2 2v3H4c-1.1 0-2 .9-2 2v11c0 1.1.9 2 2 2h16c1.1 0 2-.9 2-2V9c0-1.1-.9-2-2-2zM9 12c.83 0 1.5.67 1.5 1.5S9.83 15 9 15s-1.5-.67-1.5-1.5S8.17 12 9 12zm3 6H6v-.43c0-.6.36-1.15.92-1.39.64-.28 1.34-.43 2.08-.43s1.44.15 2.08.43c.55.24.92.78.92 1.39V18zm1-9h-2V4h2v5zm5 7.5h-4V15h4v1.5zm0-3h-4V12h4v1.5z"/></svg>
<div style="position:absolute;left:52.70px;top:350.87px;white-space:nowrap;font-size:17.5px;line-height:20.125px;color:#fff;letter-spacing:0.7px;-webkit-text-stroke:0.45px #fff">Profiles</div>
<svg style="position:absolute;left:266.25px;top:343.90px;width:33.00px;height:33.00px;" viewBox="0 0 24 24"><path fill="#fff" d="M16.59 8.59L12 13.17 7.41 8.59 6 10l6 6 6-6z"/></svg>
<div style="position:absolute;left:0;top:437px;width:313px;height:1px;background:rgba(0,0,0,0.12)"></div>
<svg style="position:absolute;left:19.80px;top:400.70px;width:22.50px;height:22.50px;" viewBox="0 0 24 24"><path fill="#fff" d="M16.5 12c1.38 0 2.49-1.12 2.49-2.5S17.88 7 16.5 7C15.12 7 14 8.12 14 9.5s1.12 2.5 2.5 2.5zM9 11c1.66 0 2.99-1.34 2.99-3S10.66 5 9 5C7.34 5 6 6.34 6 8s1.34 3 3 3zm7.5 3c-1.83 0-5.5.92-5.5 2.75V19h11v-2.25c0-1.83-3.67-2.75-5.5-2.75zM9 13c-2.33 0-7 1.17-7 3.5V19h7v-2.25c0-.85.33-2.34 2.37-3.47C10.5 13.1 9.66 13 9 13z"/></svg>
<div style="position:absolute;left:52.70px;top:401.87px;white-space:nowrap;font-size:17.5px;line-height:20.125px;color:#fff;letter-spacing:0.7px;-webkit-text-stroke:0.45px #fff">Customers</div>
<div style="position:absolute;left:0;top:488px;width:313px;height:1px;background:rgba(0,0,0,0.12)"></div>
<svg style="position:absolute;left:19.80px;top:451.70px;width:22.50px;height:22.50px;" viewBox="0 0 24 24"><path fill="#fff" d="M12 2C6.48 2 2 6.48 2 12s4.48 10 10 10 10-4.48 10-10S17.52 2 12 2zm0 3c1.66 0 3 1.34 3 3s-1.34 3-3 3-3-1.34-3-3 1.34-3 3-3zm0 14.2c-2.5 0-4.71-1.28-6-3.22.03-1.99 4-3.08 6-3.08 1.99 0 5.97 1.09 6 3.08-1.29 1.94-3.5 3.22-6 3.22z"/></svg>
<div style="position:absolute;left:52.70px;top:452.87px;white-space:nowrap;font-size:17.5px;line-height:20.125px;color:#fff;letter-spacing:0.7px;-webkit-text-stroke:0.45px #fff">Users</div>
<div style="position:absolute;left:0;top:539px;width:313px;height:1px;background:rgba(0,0,0,0.12)"></div>
<svg style="position:absolute;left:19.80px;top:502.70px;width:22.50px;height:22.50px;" viewBox="0 0 24 24"><path fill="#fff" d="M19 3h-4.18C14.4 1.84 13.3 1 12 1s-2.4.84-2.82 2H5c-1.1 0-2 .9-2 2v14c0 1.1.9 2 2 2h14c1.1 0 2-.9 2-2V5c0-1.1-.9-2-2-2zm-7 0c.55 0 1 .45 1 1s-.45 1-1 1-1-.45-1-1 .45-1 1-1zM10 15.6L8.6 17 4 12.4 8.6 7.8 10 9.2 6.8 12.4zM15.4 17L14 15.6l3.2-3.2L14 9.2l1.4-1.4 4.6 4.6z"/></svg>
<div style="position:absolute;left:52.70px;top:503.87px;white-space:nowrap;font-size:17.5px;line-height:20.125px;color:#fff;letter-spacing:0.7px;-webkit-text-stroke:0.45px #fff">Integrations center</div>
<svg style="position:absolute;left:266.25px;top:496.90px;width:33.00px;height:33.00px;" viewBox="0 0 24 24"><path fill="#fff" d="M16.59 8.59L12 13.17 7.41 8.59 6 10l6 6 6-6z"/></svg>
<div style="position:absolute;left:0;top:540px;width:313px;height:50px;background:#007f72"></div>
<div style="position:absolute;left:0;top:590px;width:313px;height:1px;background:rgba(0,0,0,0.12)"></div>
<svg style="position:absolute;left:19.80px;top:553.70px;width:22.50px;height:22.50px;" viewBox="0 0 24 24"><path fill="#fff" d="M7.77 6.76L6.23 5.48.82 12l5.41 6.52 1.54-1.28L3.42 12l4.35-5.24zM7 13h2v-2H7v2zm10-2h-2v2h2v-2zm-6 2h2v-2h-2v2zm6.77-7.52l-1.54 1.28L20.58 12l-4.35 5.24 1.54 1.28L23.18 12l-5.41-6.52z"/></svg>
<div style="position:absolute;left:52.70px;top:554.87px;white-space:nowrap;font-size:17.5px;line-height:20.125px;color:#fff;letter-spacing:0.7px;-webkit-text-stroke:0.45px #fff">Rule chains</div>
<div style="position:absolute;left:0;top:641px;width:313px;height:1px;background:rgba(0,0,0,0.12)"></div>
<svg style="position:absolute;left:19.80px;top:604.70px;width:22.50px;height:22.50px;" viewBox="0 0 24 24"><path fill="#fff" d="M12 5c-3.87 0-7 3.13-7 7h2c0-2.76 2.24-5 5-5s5 2.24 5 5h2c0-3.87-3.13-7-7-7zm1 9.29c.88-.39 1.5-1.26 1.5-2.29 0-1.38-1.12-2.5-2.5-2.5S9.5 10.62 9.5 12c0 1.02.62 1.9 1.5 2.29v3.3L7.59 21 9 22.41l3-3 3 3L16.41 21 13 17.59v-3.3zM12 1C5.93 1 1 5.93 1 12h2c0-4.97 4.03-9 9-9s9 4.03 9 9h2c0-6.07-4.93-11-11-11z"/></svg>
<div style="position:absolute;left:52.70px;top:605.87px;white-space:nowrap;font-size:17.5px;line-height:20.125px;color:#fff;letter-spacing:0.7px;-webkit-text-stroke:0.45px #fff">Edge management</div>
<svg style="position:absolute;left:266.25px;top:598.90px;width:33.00px;height:33.00px;" viewBox="0 0 24 24"><path fill="#fff" d="M16.59 8.59L12 13.17 7.41 8.59 6 10l6 6 6-6z"/></svg>
<div style="position:absolute;left:0;top:692px;width:313px;height:1px;background:rgba(0,0,0,0.12)"></div>
<svg style="position:absolute;left:19.80px;top:655.70px;width:22.50px;height:22.50px;" viewBox="0 0 24 24"><path fill="#fff" d="M13.78 15.17l2.12-2.12 6.01 6.01-2.12 2.12zm3.72-5.17c1.93 0 3.5-1.57 3.5-3.5 0-.58-.16-1.12-.41-1.6l-2.7 2.7-1.49-1.49 2.7-2.7c-.48-.25-1.02-.41-1.6-.41C13.57 3 12 4.57 12 6.5c0 .41.08.8.21 1.16l-1.85 1.85-1.78-1.78.71-.71-1.41-1.41L10 3.49c-1.17-1.17-3.07-1.17-4.24 0L2.22 7.03l1.41 1.41H.81l-.71.71 3.54 3.54.71-.71V9.15l1.41 1.41.71-.71 1.78 1.78-7.41 7.41 2.12 2.12L16.34 9.79c.36.13.75.21 1.16.21z"/></svg>
<div style="position:absolute;left:52.70px;top:656.87px;white-space:nowrap;font-size:17.5px;line-height:20.125px;color:#fff;letter-spacing:0.7px;-webkit-text-stroke:0.45px #fff">Advanced features</div>
<svg style="position:absolute;left:266.25px;top:649.90px;width:33.00px;height:33.00px;" viewBox="0 0 24 24"><path fill="#fff" d="M16.59 8.59L12 13.17 7.41 8.59 6 10l6 6 6-6z"/></svg>
<div style="position:absolute;left:0;top:743px;width:313px;height:1px;background:rgba(0,0,0,0.12)"></div>
<svg style="position:absolute;left:19.80px;top:706.70px;width:22.50px;height:22.50px;" viewBox="0 0 24 24"><path fill="#fff" d="M10 4H4c-1.1 0-1.99.9-1.99 2L2 18c0 1.1.9 2 2 2h16c1.1 0 2-.9 2-2V8c0-1.1-.9-2-2-2h-8l-2-2z"/></svg>
<div style="position:absolute;left:52.70px;top:707.87px;white-space:nowrap;font-size:17.5px;line-height:20.125px;color:#fff;letter-spacing:0.7px;-webkit-text-stroke:0.45px #fff">Resources</div>
<svg style="position:absolute;left:266.25px;top:700.90px;width:33.00px;height:33.00px;" viewBox="0 0 24 24"><path fill="#fff" d="M16.59 8.59L12 13.17 7.41 8.59 6 10l6 6 6-6z"/></svg>
<div style="position:absolute;left:0;top:794px;width:313px;height:1px;background:rgba(0,0,0,0.12)"></div>
<svg style="position:absolute;left:19.80px;top:757.70px;width:22.50px;height:22.50px;" viewBox="0 0 24 24"><path fill="#fff" d="M22 6.98V16c0 1.1-.9 2-2 2H6l-4 4V4c0-1.1.9-2 2-2h10.1c-.06.32-.1.66-.1 1 0 2.76 2.24 5 5 5 1.13 0 2.16-.39 3-1.02zM16 3c0 1.66 1.34 3 3 3s3-1.34 3-3-1.34-3-3-3-3 1.34-3 3z"/></svg>
<div style="position:absolute;left:52.70px;top:758.87px;white-space:nowrap;font-size:17.5px;line-height:20.125px;color:#fff;letter-spacing:0.7px;-webkit-text-stroke:0.45px #fff">Notification center</div>
<div style="position:absolute;left:0;top:845px;width:313px;height:1px;background:rgba(0,0,0,0.12)"></div>
<svg style="position:absolute;left:19.80px;top:808.70px;width:22.50px;height:22.50px;" viewBox="0 0 24 24"><path fill="#fff" d="M19 3H5c-1.1 0-2 .9-2 2v14c0 1.1.9 2 2 2h14c1.1 0 2-.9 2-2V5c0-1.1-.9-2-2-2zM9 17H7v-5h2v5zm4 0h-2v-3h2v3zm0-5h-2v-2h2v2zm4 5h-2V7h2v10z"/></svg>
<div style="position:absolute;left:52.70px;top:809.87px;white-space:nowrap;font-size:17.5px;line-height:20.125px;color:#fff;letter-spacing:0.7px;-webkit-text-stroke:0.45px #fff">API usage</div>
<div style="position:absolute;left:0;top:896px;width:313px;height:1px;background:rgba(0,0,0,0.12)"></div>
<svg style="position:absolute;left:19.80px;top:859.70px;width:22.50px;height:22.50px;" viewBox="0 0 24 24"><path fill="#fff" d="M18 4V3c0-.55-.45-1-1-1H5c-.55 0-1 .45-1 1v4c0 .55.45 1 1 1h12c.55 0 1-.45 1-1V6h1v4H9v11c0 .55.45 1 1 1h2c.55 0 1-.45 1-1v-9h8V4h-3z"/></svg>
<div style="position:absolute;left:52.70px;top:860.87px;white-space:nowrap;font-size:17.5px;line-height:20.125px;color:#fff;letter-spacing:0.7px;-webkit-text-stroke:0.45px #fff">White labeling</div>
<div style="position:absolute;left:0;top:947px;width:313px;height:1px;background:rgba(0,0,0,0.12)"></div>
<svg style="position:absolute;left:19.80px;top:910.70px;width:22.50px;height:22.50px;" viewBox="0 0 24 24"><path fill="#fff" d="M19.14 12.94c.04-.3.06-.61.06-.94 0-.32-.02-.64-.07-.94l2.03-1.58c.18-.14.23-.41.12-.61l-1.92-3.32c-.12-.22-.37-.29-.59-.22l-2.39.96c-.5-.38-1.03-.7-1.62-.94l-.36-2.54c-.04-.24-.24-.41-.48-.41h-3.84c-.24 0-.43.17-.47.41l-.36 2.54c-.59.24-1.13.57-1.62.94l-2.39-.96c-.22-.08-.47 0-.59.22L2.74 8.87c-.12.21-.08.47.12.61l2.03 1.58c-.05.3-.09.63-.09.94s.02.64.07.94l-2.03 1.58c-.18.14-.23.41-.12.61l1.92 3.32c.12.22.37.29.59.22l2.39-.96c.5.38 1.03.7 1.62.94l.36 2.54c.05.24.24.41.48.41h3.84c.24 0 .44-.17.47-.41l.36-2.54c.59-.24 1.13-.56 1.62-.94l2.39.96c.22.08.47 0 .59-.22l1.92-3.32c.12-.22.07-.47-.12-.61l-2.01-1.58zM12 15.6c-1.98 0-3.6-1.62-3.6-3.6s1.62-3.6 3.6-3.6 3.6 1.62 3.6 3.6-1.62 3.6-3.6 3.6z"/></svg>
<div style="position:absolute;left:52.70px;top:911.87px;white-space:nowrap;font-size:17.5px;line-height:20.125px;color:#fff;letter-spacing:0.7px;-webkit-text-stroke:0.45px #fff">Settings</div>
<div style="position:absolute;left:0;top:998px;width:313px;height:1px;background:rgba(0,0,0,0.12)"></div>
<svg style="position:absolute;left:19.80px;top:961.70px;width:22.50px;height:22.50px;" viewBox="0 0 24 24"><path fill="#fff" d="M12 1L3 5v6c0 5.55 3.84 10.74 9 12 5.16-1.26 9-6.45 9-12V5l-9-4zm0 10.99h7c-.53 4.12-3.28 7.79-7 8.94V12H5V6.3l7-3.11v8.8z"/></svg>
<div style="position:absolute;left:52.70px;top:962.87px;white-space:nowrap;font-size:17.5px;line-height:20.125px;color:#fff;letter-spacing:0.7px;-webkit-text-stroke:0.45px #fff">Security</div>
<svg style="position:absolute;left:266.25px;top:955.90px;width:33.00px;height:33.00px;" viewBox="0 0 24 24"><path fill="#fff" d="M16.59 8.59L12 13.17 7.41 8.59 6 10l6 6 6-6z"/></svg>
<div style="position:absolute;left:251.6px;top:239px;width:48.7px;height:25.3px;border-radius:13px;background:#fff;color:#00695c;font-weight:bold;font-size:14px;line-height:25.3px;text-align:center">NEW</div>
<svg style="position:absolute;left:50px;top:12px" width="50" height="50" viewBox="0 0 50 50">
<g fill="none" stroke="#fff" stroke-width="2.2" stroke-linecap="round">
<circle cx="10.6" cy="12.5" r="3.6"/><circle cx="39.6" cy="41.7" r="3.6"/>
<path d="M14 9 Q19 7 24.6 6.9"/><path d="M8 16 Q5.5 21 5 26.6"/>
<path d="M43 38.5 Q45.2 33 45.2 27.6"/><path d="M36 45 Q31 47 26 47.2"/>
<path d="M18.5 15.5l3 3M14 20l3 3M32.5 14l-2.5 2.5M37.5 18.5l-2.5 2.5M16.5 34.5l-2.5 2.5M21 39l-2.5 2.5M29 37l2.5 2.5M34 32.5l2.5 2.5"/>
</g>
<path fill="#fff" d="M26 14 L38 26.5 L24 40.5 L12 28 Z"/>
<path fill="none" stroke="#00695c" stroke-width="2" d="M27 21 q2 0 2 2 q0 2-2 3 q-2 1-1 3 l-4 1 l1 4"/>
</svg>
<div style="position:absolute;left:102.00px;top:21.58px;white-space:nowrap;font-size:29px;line-height:33.350px;color:#fff;letter-spacing:-0.6px">ThingsBoard</div>
<div style="position:absolute;left:187.50px;top:51.02px;white-space:nowrap;font-size:13px;line-height:14.950px;color:#fff;">Professional</div>
<div style="position:absolute;left:313px;top:80px;width:312px;height:1000px;background:#fff;box-shadow:3px 0 4px -1px rgba(0,0,0,0.13)"></div>
<div style="position:absolute;left:313px;top:80px;width:312px;height:70px;background:#00695c"></div>
<div style="position:absolute;left:313px;top:0;width:1px;height:150px;background:rgba(0,0,0,0.14)"></div>
<svg style="position:absolute;left:328.00px;top:100.00px;width:30.00px;height:30.00px;" viewBox="0 0 24 24"><path fill="#fff" d="M7.77 6.76L6.23 5.48.82 12l5.41 6.52 1.54-1.28L3.42 12l4.35-5.24zM7 13h2v-2H7v2zm10-2h-2v2h2v-2zm-6 2h2v-2h-2v2zm6.77-7.52l-1.54 1.28L20.58 12l-4.35 5.24 1.54 1.28L23.18 12l-5.41-6.52z"/></svg>
<div style="position:absolute;left:378.20px;top:103.25px;white-space:nowrap;font-size:21px;line-height:24.150px;color:#fff;letter-spacing:-0.35px">Root Rule Chain</div>
<svg style="position:absolute;left:583.00px;top:103.00px;width:24.00px;height:24.00px;" viewBox="0 0 24 24"><path fill="#80cbc4" d="M7 10l5 5 5-5z"/></svg>
<div style="position:absolute;left:313px;top:150px;width:312px;height:60px;background:#f5f5f5"></div>
<svg style="position:absolute;left:329.90px;top:165.20px;width:24.70px;height:24.70px;" viewBox="0 0 24 24"><path fill="#222" d="M15.5 14h-.79l-.28-.27C15.41 12.59 16 11.11 16 9.5 16 5.91 13.09 3 9.5 3S3 5.91 3 9.5 5.91 16 9.5 16c1.61 0 3.09-.59 4.23-1.57l.27.28v.79l5 4.99L20.49 19l-4.99-5zm-6 0C7.01 14 5 11.99 5 9.5S7.01 5 9.5 5 14 7.01 14 9.5 11.99 14 9.5 14z"/></svg>
<div style="position:absolute;left:370.50px;top:169.57px;white-space:nowrap;font-size:20px;line-height:23.000px;color:#222;letter-spacing:0.6px">rule</div>
<svg style="position:absolute;left:583.00px;top:165.80px;width:24.00px;height:24.00px;" viewBox="0 0 24 24"><path fill="#222" d="M19 6.41L17.59 5 12 10.59 6.41 5 5 6.41 10.59 12 5 17.59 6.41 19 12 13.41 17.59 19 19 17.59 13.41 12z"/></svg>
<div style="position:absolute;left:320px;top:199.5px;width:298px;height:1px;background:#8c8c8c"></div>
<div style="position:absolute;left:313px;top:210px;width:312px;height:60px;background:#e8e8e8;border-bottom:1px solid #dcdcdc;box-shadow:inset 0 -5px 5px -4px rgba(0,0,0,0.05)"></div>
<svg style="position:absolute;left:342.20px;top:224.40px;width:30.40px;height:30.40px;" viewBox="0 0 24 24"><path fill="#1a1a1a" d="M10 18h4v-2h-4v2zM3 6v2h18V6H3zm3 7h12v-2H6v2z"/></svg>
<div style="position:absolute;left:383.00px;top:229.67px;white-space:nowrap;font-size:17.5px;line-height:20.125px;color:#1a1a1a;-webkit-text-stroke:0.5px #1a1a1a">Filter</div>
<svg style="position:absolute;left:583px;top:240px" width="16" height="10"><path d="M1 1.5 L7.5 8 L14 1.5" fill="none" stroke="#6f6f6f" stroke-width="1.8"/></svg>
<div style="position:absolute;left:313px;top:270px;width:312px;height:60px;background:#e8e8e8;border-bottom:1px solid #dcdcdc;box-shadow:inset 0 -5px 5px -4px rgba(0,0,0,0.05)"></div>
<svg style="position:absolute;left:342.20px;top:284.40px;width:30.40px;height:30.40px;" viewBox="0 0 24 24"><path fill="#1a1a1a" d="M14 10H2v2h12v-2zm0-4H2v2h12V6zm4 8v-4h-2v4h-4v2h4v4h2v-4h4v-2h-4zM2 16h8v-2H2v2z"/></svg>
<div style="position:absolute;left:383.00px;top:289.67px;white-space:nowrap;font-size:17.5px;line-height:20.125px;color:#1a1a1a;-webkit-text-stroke:0.5px #1a1a1a">Enrichment</div>
<svg style="position:absolute;left:583px;top:300px" width="16" height="10"><path d="M1 1.5 L7.5 8 L14 1.5" fill="none" stroke="#6f6f6f" stroke-width="1.8"/></svg>
<div style="position:absolute;left:313px;top:330px;width:312px;height:60px;background:#e8e8e8;border-bottom:1px solid #dcdcdc;box-shadow:inset 0 -5px 5px -4px rgba(0,0,0,0.05)"></div>
<svg style="position:absolute;left:342.20px;top:344.40px;width:30.40px;height:30.40px;" viewBox="0 0 24 24"><path fill="#1a1a1a" d="M22 18v-2H8V4h2L7 1 4 4h2v2H2v2h4v8c0 1.1.9 2 2 2h8v2h-2l3 3 3-3h-2v-2h4zM10 8h6v6h2V8c0-1.1-.9-2-2-2h-6v2z"/></svg>
<div style="position:absolute;left:383.00px;top:349.67px;white-space:nowrap;font-size:17.5px;line-height:20.125px;color:#1a1a1a;-webkit-text-stroke:0.5px #1a1a1a">Transformation</div>
<svg style="position:absolute;left:583px;top:360px" width="16" height="10"><path d="M1 1.5 L7.5 8 L14 1.5" fill="none" stroke="#6f6f6f" stroke-width="1.8"/></svg>
<div style="position:absolute;left:313px;top:390px;width:312px;height:60px;background:#e8e8e8;border-bottom:1px solid #dcdcdc;box-shadow:inset 0 -5px 5px -4px rgba(0,0,0,0.05)"></div>
<svg style="position:absolute;left:342.20px;top:404.40px;width:30.40px;height:30.40px;" viewBox="0 0 24 24"><path fill="#1a1a1a" d="M7 2v11h3v9l7-12h-4l4-8z"/></svg>
<div style="position:absolute;left:383.00px;top:409.67px;white-space:nowrap;font-size:17.5px;line-height:20.125px;color:#1a1a1a;-webkit-text-stroke:0.5px #1a1a1a">Action</div>
<svg style="position:absolute;left:583px;top:420px" width="16" height="10"><path d="M1 1.5 L7.5 8 L14 1.5" fill="none" stroke="#6f6f6f" stroke-width="1.8"/></svg>
<div style="position:absolute;left:313px;top:450px;width:312px;height:60px;background:#e8e8e8;border-bottom:1px solid #dcdcdc;box-shadow:inset 0 -5px 5px -4px rgba(0,0,0,0.05)"></div>
<svg style="position:absolute;left:342.20px;top:464.40px;width:30.40px;height:30.40px;" viewBox="0 0 24 24"><path fill="#1a1a1a" d="M23 8c0 1.1-.9 2-2 2-.18 0-.35-.02-.51-.07l-3.56 3.55c.05.16.07.34.07.52 0 1.1-.9 2-2 2s-2-.9-2-2c0-.18.02-.36.07-.52l-2.55-2.55c-.16.05-.34.07-.52.07s-.36-.02-.52-.07l-4.55 4.56c.05.16.07.33.07.51 0 1.1-.9 2-2 2s-2-.9-2-2 .9-2 2-2c.18 0 .35.02.51.07l4.56-4.55C8.02 9.36 8 9.18 8 9c0-1.1.9-2 2-2s2 .9 2 2c0 .18-.02.36-.07.52l2.55 2.55c.16-.05.34-.07.52-.07s.36.02.52.07l3.55-3.56C19.02 8.35 19 8.18 19 8c0-1.1.9-2 2-2s2 .9 2 2z"/></svg>
<div style="position:absolute;left:383.00px;top:469.67px;white-space:nowrap;font-size:17.5px;line-height:20.125px;color:#1a1a1a;-webkit-text-stroke:0.5px #1a1a1a">Analytics</div>
<svg style="position:absolute;left:583px;top:480px" width="16" height="10"><path d="M1 1.5 L7.5 8 L14 1.5" fill="none" stroke="#6f6f6f" stroke-width="1.8"/></svg>
<div style="position:absolute;left:313px;top:510px;width:312px;height:60px;background:#e8e8e8;border-bottom:1px solid #dcdcdc;box-shadow:inset 0 -5px 5px -4px rgba(0,0,0,0.05)"></div>
<svg style="position:absolute;left:342.20px;top:524.40px;width:30.40px;height:30.40px;" viewBox="0 0 24 24"><path fill="#1a1a1a" d="M19.35 10.04C18.67 6.59 15.64 4 12 4 9.11 4 6.6 5.64 5.35 8.04 2.34 8.36 0 10.91 0 14c0 3.31 2.69 6 6 6h13c2.76 0 5-2.24 5-5 0-2.64-2.05-4.78-4.65-4.96zM14 13v4h-4v-4H7l5-5 5 5h-3z"/></svg>
<div style="position:absolute;left:383.00px;top:529.67px;white-space:nowrap;font-size:17.5px;line-height:20.125px;color:#1a1a1a;-webkit-text-stroke:0.5px #1a1a1a">External</div>
<svg style="position:absolute;left:583px;top:540px" width="16" height="10"><path d="M1 1.5 L7.5 8 L14 1.5" fill="none" stroke="#6f6f6f" stroke-width="1.8"/></svg>
<div style="position:absolute;left:313px;top:570px;width:312px;height:60px;background:#e8e8e8;border-bottom:1px solid #dcdcdc;box-shadow:inset 0 -5px 5px -4px rgba(0,0,0,0.05)"></div>
<svg style="position:absolute;left:342.20px;top:584.40px;width:30.40px;height:30.40px;" viewBox="0 0 24 24"><path fill="#1a1a1a" d="M7.77 6.76L6.23 5.48.82 12l5.41 6.52 1.54-1.28L3.42 12l4.35-5.24zM7 13h2v-2H7v2zm10-2h-2v2h2v-2zm-6 2h2v-2h-2v2zm6.77-7.52l-1.54 1.28L20.58 12l-4.35 5.24 1.54 1.28L23.18 12l-5.41-6.52z"/></svg>
<div style="position:absolute;left:383.00px;top:589.67px;white-space:nowrap;font-size:17.5px;line-height:20.125px;color:#1a1a1a;-webkit-text-stroke:0.5px #1a1a1a">Flow</div>
<svg style="position:absolute;left:583px;top:594px" width="16" height="10"><path d="M1 8.5 L7.5 2 L14 8.5" fill="none" stroke="#6f6f6f" stroke-width="1.8"/></svg>
<div style="position:absolute;left:313px;top:705px;width:312px;height:1px;background:#d6d6d6"></div>
<div style="position:absolute;left:350.5px;top:643px;width:214px;height:53px;background:#a794ba;border:1px solid #6d6d6d;border-radius:6px"></div>
<div style="position:absolute;left:338.2px;top:661.6px;width:16.5px;height:16.7px;background:#d4d4d4;border:1.3px solid #333;border-radius:5px"></div>
<div style="position:absolute;left:560.4px;top:661.6px;width:16.5px;height:16.7px;background:#d4d4d4;border:1.3px solid #333;border-radius:5px"></div>
<svg style="position:absolute;left:363.50px;top:658.00px;width:25.00px;height:25.00px;" viewBox="0 0 24 24"><path fill="#333" d="M7.77 6.76L6.23 5.48.82 12l5.41 6.52 1.54-1.28L3.42 12l4.35-5.24zM7 13h2v-2H7v2zm10-2h-2v2h2v-2zm-6 2h2v-2h-2v2zm6.77-7.52l-1.54 1.28L20.58 12l-4.35 5.24 1.54 1.28L23.18 12l-5.41-6.52z"/></svg>
<div style="position:absolute;left:392.20px;top:660.98px;white-space:nowrap;font-size:15px;line-height:17.250px;color:#333;">rule chain</div>
<div style="position:absolute;left:333px;top:638.5px;width:248px;height:63px;border:3px solid #ffc533;border-radius:9px;box-shadow:0 0 5px rgba(255,190,60,0.5)"></div>
<div style="position:absolute;left:587px;top:491px;width:410px;height:355px;background:#fff;border-radius:6px;box-shadow:0 1px 6px rgba(0,0,0,0.16)"></div>
<div style="position:absolute;left:604.60px;top:499.87px;white-space:nowrap;font-size:17.5px;line-height:20.125px;color:#3d3d3d;font-weight:bold;">rule chain</div>
<div style="position:absolute;left:604.60px;top:522.37px;white-space:nowrap;font-size:17.5px;line-height:20.125px;color:#3d3d3d;font-style:italic;letter-spacing:-0.15px;left:auto;right:980.6px">Forwards messages to another rule chain</div>
<div style="position:absolute;left:604.60px;top:556.47px;white-space:nowrap;font-size:17.5px;line-height:20.125px;color:#3d3d3d;left:auto;right:984px">message will be forwarded to the</div>
<div style="position:absolute;left:604.60px;top:579.47px;white-space:nowrap;font-size:17.5px;line-height:20.125px;color:#3d3d3d;">input node of target rule chain. If &#x27;Forward</div>
<div style="position:absolute;left:604.60px;top:601.92px;white-space:nowrap;font-size:17.5px;line-height:20.125px;color:#3d3d3d;">message to the originator&#x27;s default rule chain&#x27; is</div>
<div style="position:absolute;left:604.60px;top:624.37px;white-space:nowrap;font-size:17.5px;line-height:20.125px;color:#3d3d3d;">enabled, then target rule chain might be</div>
<div style="position:absolute;left:604.60px;top:646.82px;white-space:nowrap;font-size:17.5px;line-height:20.125px;color:#3d3d3d;">resolved dynamically based on incoming</div>
<div style="position:absolute;left:604.60px;top:669.27px;white-space:nowrap;font-size:17.5px;line-height:20.125px;color:#3d3d3d;">message originator. In this case rule chain</div>
<div style="position:absolute;left:604.60px;top:691.72px;white-space:nowrap;font-size:17.5px;line-height:20.125px;color:#3d3d3d;">specified in the configuration will be used as</div>
<div style="position:absolute;left:604.60px;top:714.17px;white-space:nowrap;font-size:17.5px;line-height:20.125px;color:#3d3d3d;">fallback rule chain.</div>
<div style="position:absolute;left:604.60px;top:759.47px;white-space:nowrap;font-size:17.5px;line-height:20.125px;color:#3d3d3d;">Output connections: <i>Any connection(s)</i></div>
<div style="position:absolute;left:604.60px;top:781.87px;white-space:nowrap;font-size:17.5px;line-height:20.125px;color:#3d3d3d;"><i>produced by output node(s) in the target rule</i></div>
<div style="position:absolute;left:604.60px;top:804.37px;white-space:nowrap;font-size:17.5px;line-height:20.125px;color:#3d3d3d;"><i>chain.</i></div>
<svg style="position:absolute;left:500px;top:584px" width="20" height="60"><line x1="8.3" y1="1" x2="8.3" y2="55" stroke="#ffc533" stroke-width="3.2" stroke-dasharray="9 4"/></svg>
<div style="position:absolute;left:504.5px;top:634px;width:9px;height:9px;border-radius:50%;background:#ffc533"></div>
<div style="position:absolute;left:448.5px;top:510px;width:357px;height:76px;background:#fdf0e1;border:3px solid #ffc533;border-radius:10px;box-shadow:0 0 6px rgba(255,190,60,0.45)"></div>
<div style="position:absolute;left:456.00px;top:515.61px;white-space:nowrap;font-size:28.1px;line-height:32.315px;color:#000;">Find a "rule chain" node</div>
<div style="position:absolute;left:456.00px;top:549.51px;white-space:nowrap;font-size:28.1px;line-height:32.315px;color:#000;">and drag it to the rule chain</div>
<div style="position:absolute;left:473.2px;top:478px;width:29.6px;height:35.5px;background:#fff;border:3px solid #ffc533;border-radius:10px;box-shadow:0 0 6px rgba(255,190,60,0.45)"></div>
<div style="position:absolute;left:479.50px;top:480.28px;white-space:nowrap;font-size:27.8px;line-height:31.970px;color:#000;">9</div>
</body></html>
